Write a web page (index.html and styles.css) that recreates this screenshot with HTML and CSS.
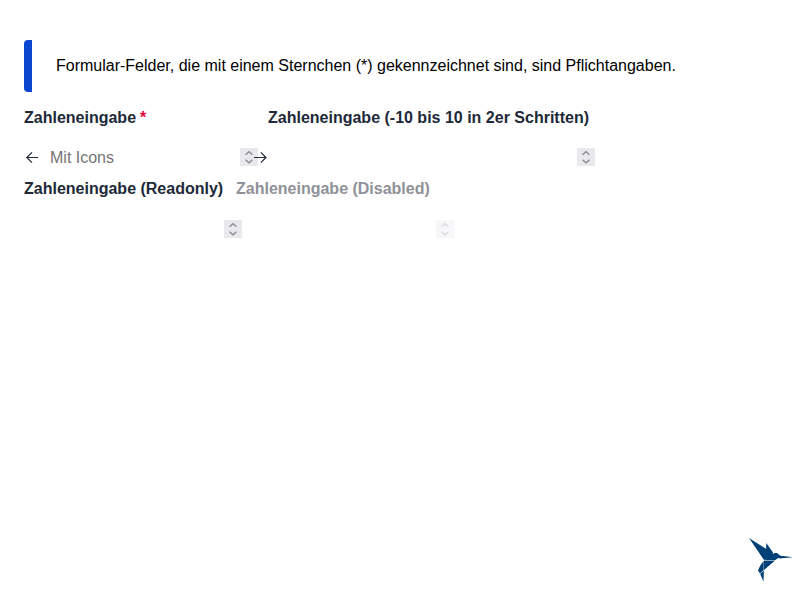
FILE: index.html
```html
<!DOCTYPE html>
<html lang="de">
<head>
<meta charset="utf-8">
<title>Zahleneingabe</title>
<link rel="stylesheet" href="styles.css">
</head>
<body>
<svg class="defs" aria-hidden="true">
  <symbol id="spin" viewBox="0 0 18 18"><path d="M5.5 6.7 9 3.7l3.5 3M5.5 11.8 9 14.8l3.5-3"/></symbol>
</svg>
<main>
  <p class="hint">Formular-Felder, die mit einem Sternchen (*) gekennzeichnet sind, sind Pflichtangaben.</p>
  <form>
    <div class="row">
      <div class="field first">
        <span class="label">Zahleneingabe<span class="star">*</span></span>
        <div class="control">
          <svg class="arrow left" viewBox="0 0 12 12"><path d="M12 6.5H.8M6 1.3 .8 6.5 6 11.7"/></svg>
          <span class="placeholder">Mit Icons</span>
          <svg class="spinner"><use href="#spin"/></svg>
          <svg class="arrow right" viewBox="0 0 12 12"><path d="M0 6.5h12M6.8 1.3 12 6.5 6.8 11.7"/></svg>
        </div>
      </div>
      <div class="field second">
        <span class="label">Zahleneingabe (-10 bis 10 in 2er Schritten)</span>
        <div class="control"><svg class="spinner"><use href="#spin"/></svg></div>
      </div>
    </div>
    <div class="row lower">
      <div class="field third">
        <span class="label">Zahleneingabe (Readonly)</span>
        <div class="control"><svg class="spinner"><use href="#spin"/></svg></div>
      </div>
      <div class="field disabled">
        <span class="label">Zahleneingabe (Disabled)</span>
        <div class="control"><svg class="spinner"><use href="#spin"/></svg></div>
      </div>
    </div>
  </form>
</main>
<svg class="logo" viewBox="0 0 60 60">
  <path d="M9 8 31 22 34.5 25 24 30Z"/>
  <path d="M26.3 13 33 22.5 31.5 24.5 26 20Z"/>
  <path d="M24 30.2 34.5 23 37 23 40 25.5 39 27.5 35 30.2Z"/>
  <path d="M39 25.5 53 27.3 39 28.5Z"/>
  <path d="M24 30.7H34.8L24 40Z"/>
  <path d="M23.7 30.7V40L20 43.6 18 40.5 20 36Z"/>
  <path d="M23.9 40.4 23.5 51.5 20.2 44Z"/>
</svg>
</body>
</html>
```

FILE: styles.css
```css
body {
  margin: 0;
  background: #fff;
  font: 16px/20px "Liberation Sans", Arial, sans-serif;
  color: #000;
}
.defs { display: none; }
main { padding: 40px 24px 0; }
.hint {
  margin: 0;
  box-sizing: border-box;
  height: 52px;
  padding: 16px 24px 16px 32px;
  position: relative;
}
.hint::before {
  content: "";
  position: absolute;
  left: 0;
  top: 0;
  bottom: 0;
  width: 8px;
  border-radius: 4px 0 0 4px;
  background: #0b46cf;
}
form { padding-top: 16px; }
.row { display: flex; }
.lower { padding-top: 13px; }
.lower .control { margin-top: 21px; }
.field { flex: none; }
.first { width: 244px; }
.second { width: 327px; }
.third { width: 218px; margin-right: -6px; }
.disabled { width: 218px; }
.label {
  display: block;
  font-weight: 700;
  color: #202938;
  white-space: nowrap;
}
.star { color: #e6003e; margin-left: 4px; }
.control {
  display: flex;
  align-items: center;
  justify-content: flex-end;
  height: 18px;
  margin-top: 20px;
}
.placeholder { flex: 1; padding-top: 2px; color: #757575; }
.arrow {
  width: 12px;
  height: 12px;
  flex: none;
  fill: none;
  stroke: #202938;
  stroke-width: 1.2;
  overflow: visible;
}
.left { margin: 0 12px 0 2px; }
.right { margin: 0 2px 0 -4px; position: relative; }
.spinner {
  width: 18px;
  height: 18px;
  flex: none;
  background: #e8e8ed;
  fill: none;
  stroke: #8c8c98;
  stroke-width: 1.4;
}
.disabled .label { color: #8f9197; }
.disabled .spinner { opacity: .3; }
.logo {
  position: fixed;
  right: 0;
  bottom: 10px;
  width: 60px;
  height: 60px;
  fill: #004078;
}
```
